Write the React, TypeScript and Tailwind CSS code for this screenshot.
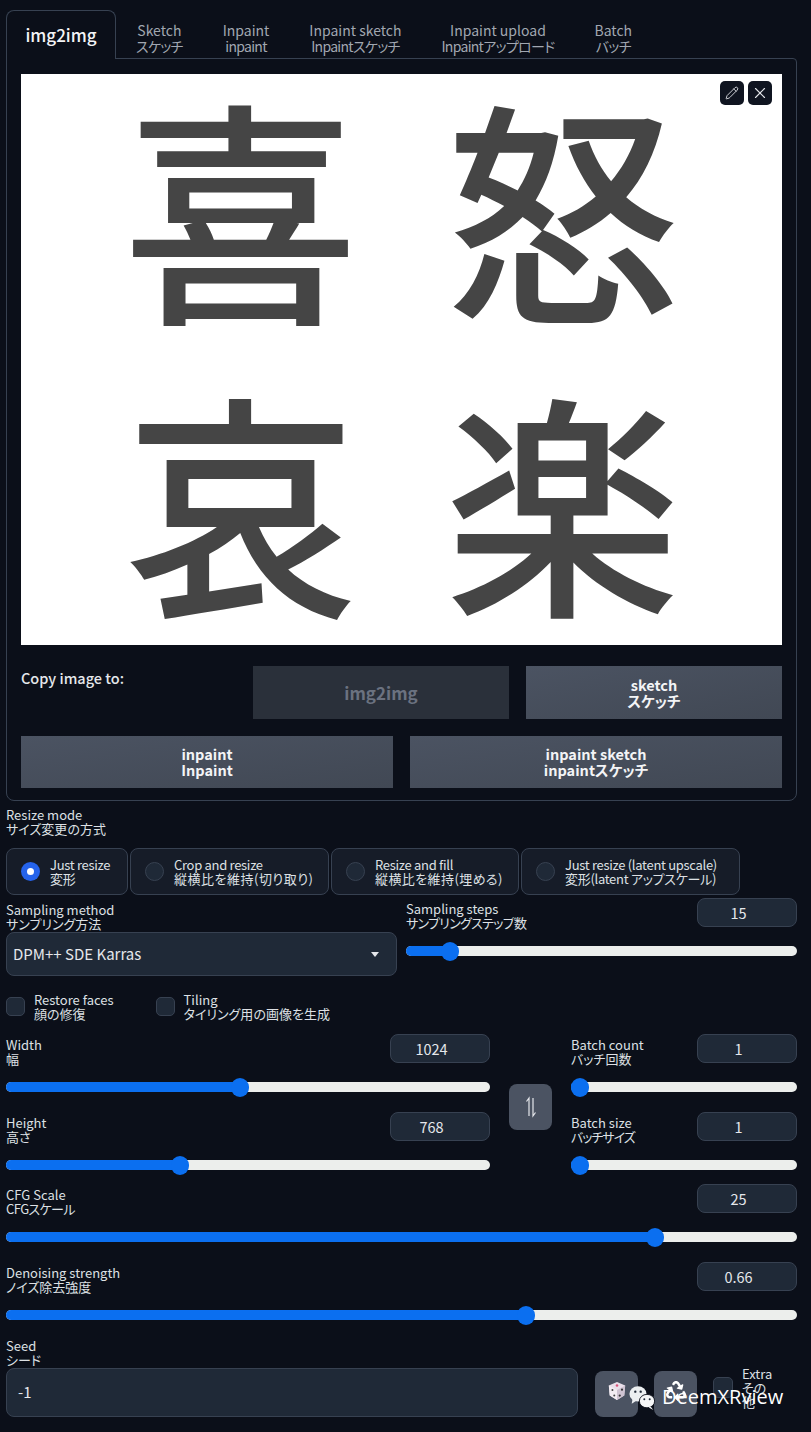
import { Pencil, X } from 'lucide-react';
import { FaRecycle } from 'react-icons/fa';

const font = { fontFamily: '"Noto Sans CJK JP", "Noto Sans", sans-serif' };

const tabs = [
  ['Sketch', 'スケッチ'],
  ['Inpaint', 'inpaint'],
  ['Inpaint sketch', 'Inpaintスケッチ'],
  ['Inpaint upload', 'Inpaintアップロード'],
  ['Batch', 'バッチ'],
];

const radios = [
  { en: 'Just resize', ja: '変形', w: 'w-[122px]', on: true },
  { en: 'Crop and resize', ja: '縦横比を維持(切り取り)', w: 'w-[199px]', jaClass: 'tracking-[0.5px]' },
  { en: 'Resize and fill', ja: '縦横比を維持(埋める)', w: 'w-[188px]', jaClass: 'tracking-[0.4px]' },
  { en: 'Just resize (latent upscale)', ja: '変形(latent アップスケール)', w: 'w-[219px]' },
];

function Label({ en, ja, tight, jaClass }: { en: string; ja: string; tight?: boolean; jaClass?: string }) {
  return (
    <div className={`text-[13px] leading-[14px] text-[#dde0e4] whitespace-nowrap ${tight ? 'tracking-[-0.3px]' : ''}`}>
      <div>{en}</div>
      <div className={jaClass}>{ja}</div>
    </div>
  );
}

function NumberBox({ value }: { value: string }) {
  return (
    <div className="flex h-[29px] w-[100px] items-center justify-center rounded-lg border border-[#374151] bg-[#1f2937] pr-[17px] text-[14.5px] text-[#e5e7eb]">
      {value}
    </div>
  );
}

function Slider({ value }: { value: number }) {
  return (
    <div className="relative h-[10px] w-full rounded-full bg-[#eceeec]">
      <div className="h-full rounded-full bg-[#0b6ff0]" style={{ width: `${value}%` }} />
      <div
        className="absolute top-[-4px] h-[19px] w-[18px] -translate-x-1/2 rounded-full bg-[#0b6ff0]"
        style={{ left: `${value}%` }}
      />
    </div>
  );
}

function SliderRow({ en, ja, num, value, jaClass }: { en: string; ja: string; num: string; value: number; jaClass?: string }) {
  return (
    <div>
      <div className="flex items-start justify-between">
        <div className="pt-[4px]">
          <Label en={en} ja={ja} jaClass={jaClass} />
        </div>
        <NumberBox value={num} />
      </div>
      <div className="mt-[16px]">
        <Slider value={value} />
      </div>
    </div>
  );
}

function CopyButton({ top, bottom, disabled }: { top: string; bottom?: string; disabled?: boolean }) {
  return (
    <div
      className={
        disabled
          ? 'flex h-full flex-1 items-center justify-center bg-[#2a303a] text-[17px] font-bold text-[#6b7280]'
          : 'flex h-full flex-1 flex-col items-center justify-center bg-gradient-to-br from-[#4b5362] to-[#414854] text-[14.5px] font-bold leading-[16px] text-[#f3f4f6]'
      }
    >
      <div>{top}</div>
      {bottom && <div>{bottom}</div>}
    </div>
  );
}

function Check({ en, ja, ml }: { en: string; ja: string; ml?: string }) {
  return (
    <div className={`flex items-start gap-[9px] ${ml ?? ''}`}>
      <div className="mt-[4px] h-[19px] w-[19px] rounded-[5px] border border-[#374151] bg-[#1f2937]" />
      <Label en={en} ja={ja} />
    </div>
  );
}

function Dice() {
  return (
    <svg width="20" height="20" viewBox="0 0 20 22" className="-mt-[6px]">
      <path d="M10 1 19 5 18 16 10 21 2 16 1 5Z" fill="#e9dfea" />
      <path d="M10 10 19 5 18 16 10 21Z" fill="#cfc3d2" />
      <path d="M10 10 1 5 2 16 10 21Z" fill="#f3edf3" />
      <circle cx="10" cy="5" r="1.4" fill="#d9527a" />
      <circle cx="5" cy="10" r="1.1" fill="#444" />
      <circle cx="7" cy="16" r="1.1" fill="#444" />
      <circle cx="15.5" cy="9.5" r="1.2" fill="#333" />
      <circle cx="13" cy="16" r="1.2" fill="#333" />
    </svg>
  );
}

function WeChat() {
  return (
    <svg width="29" height="27" viewBox="0 0 30 30">
      <ellipse cx="10" cy="11" rx="9.5" ry="8.5" fill="#eceff1" />
      <path d="M4 16 3 22 9 18Z" fill="#eceff1" />
      <circle cx="7" cy="8.5" r="1.3" fill="#1f2937" />
      <circle cx="13" cy="8.5" r="1.3" fill="#1f2937" />
      <ellipse cx="20" cy="19" rx="8.5" ry="7.5" fill="#f5f6f7" stroke="#0b0f19" strokeWidth="1" />
      <path d="M24 25 27 29 22 26Z" fill="#f5f6f7" />
      <circle cx="17" cy="17" r="1.1" fill="#1f2937" />
      <circle cx="23" cy="17" r="1.1" fill="#1f2937" />
    </svg>
  );
}

function SwapArrows() {
  return (
    <svg width="12" height="22" viewBox="0 0 12 22" fill="none" stroke="#e5e7eb" strokeWidth="1.2">
      <path d="M4 20V2L1.5 5.5" />
      <path d="M8 2V20L10.5 16.5" />
    </svg>
  );
}

export default function App() {
  return (
    <div
      className="relative h-[1432px] w-[811px] overflow-hidden bg-[#0b0f19] pl-[6px] pr-[14px] pt-[10px] text-[#d1d5db] [font-feature-settings:'palt']"
      style={font}
    >
      {/* tabs */}
      <div className="relative z-10 flex h-[49px] items-stretch">
        <div className="flex h-[49px] w-[110px] items-center justify-center rounded-t-lg border border-b-0 border-[#374151] bg-[#0b0f19] text-[17px] font-medium text-[#f3f4f6]">
          img2img
        </div>
        <div className="flex pt-[12px] text-[14px] leading-[16px] text-[#a1a7b1]">
          {tabs.map(([a, b]) => (
            <div key={a} className="px-[20px] text-center whitespace-nowrap">
              <div>{a}</div>
              <div className="tracking-[-0.7px]">{b}</div>
            </div>
          ))}
        </div>
      </div>

      <div className="-mt-px h-[743px] w-[791px] rounded-b-lg rounded-tr-sm border border-[#374151] px-[14px] pt-[15px]">
        <div className="relative h-[571px] w-[761px] overflow-hidden bg-white">
          <div className="grid grid-cols-[322px_322px] justify-center gap-y-[57px] pt-[11px] text-center text-[236px] font-medium leading-[236px] text-[#454545] [font-feature-settings:normal]">
            <div>喜</div>
            <div>怒</div>
            <div>哀</div>
            <div>楽</div>
          </div>
          <div className="absolute right-[10px] top-[7px] flex gap-[4px]">
            <div className="flex h-[24px] w-[24px] items-center justify-center rounded-[5px] bg-[#0f1420] text-[#e5e7eb]">
              <Pencil size={14} strokeWidth={1.5} />
            </div>
            <div className="flex h-[24px] w-[24px] items-center justify-center rounded-[5px] bg-[#0f1420] text-[#e5e7eb]">
              <X size={18} strokeWidth={1.5} />
            </div>
          </div>
        </div>

        <div className="mt-[21px] flex h-[53px]">
          <div className="w-[232px] text-[14.5px] font-medium leading-[23px] text-[#e5e7eb]">Copy image to:</div>
          <div className="flex flex-1 gap-[17px]">
            <CopyButton top="img2img" disabled />
            <CopyButton top="sketch" bottom="スケッチ" />
          </div>
        </div>
        <div className="mt-[17px] flex h-[52px] gap-[17px]">
          <CopyButton top="inpaint" bottom="Inpaint" />
          <CopyButton top="inpaint sketch" bottom="inpaintスケッチ" />
        </div>
      </div>

      {/* resize mode */}
      <div className="mt-[7px]">
        <Label en="Resize mode" ja="サイズ変更の方式" />
      </div>
      <div className="mt-[12px] flex gap-[2px]">
        {radios.map((r) => (
          <div
            key={r.en}
            className={`${r.w} flex h-[47px] shrink-0 items-center gap-[10px] rounded-lg border border-[#374151] bg-[#161c28] pl-[14px]`}
          >
            {r.on ? (
              <div className="flex h-[19px] w-[19px] shrink-0 items-center justify-center rounded-full bg-[#2563eb]">
                <div className="h-[7px] w-[7px] rounded-full bg-white" />
              </div>
            ) : (
              <div className="h-[19px] w-[19px] shrink-0 rounded-full border border-[#374151] bg-[#1f2937]" />
            )}
            <Label en={r.en} ja={r.ja} tight jaClass={r.jaClass} />
          </div>
        ))}
      </div>

      {/* sampling */}
      <div className="mt-[3px] flex gap-[9px]">
        <div className="w-[391px] pt-[5px]">
          <Label en="Sampling method" ja="サンプリング方法" />
          <div className="mt-[1px] flex h-[44px] items-center justify-between rounded-lg border border-[#374151] bg-[#1f2937] pl-[6px] pr-[17px] text-[15px] text-[#e5e7eb]">
            <span>DPM++ SDE Karras</span>
            <span className="h-0 w-0 border-x-[4px] border-t-[5px] border-x-transparent border-t-[#e5e7eb]" />
          </div>
        </div>
        <div className="flex-1">
          <SliderRow en="Sampling steps" ja="サンプリングステップ数" num="15" value={11.3} jaClass="tracking-[-0.7px]" />
        </div>
      </div>

      {/* checkboxes */}
      <div className="mt-[17px] flex">
        <Check en="Restore faces" ja="顔の修復" />
        <Check en="Tiling" ja="タイリング用の画像を生成" ml="ml-[42px]" />
      </div>

      {/* size and batch */}
      <div className="mt-[13px] flex">
        <div className="flex w-[484px] flex-col gap-[20px]">
          <SliderRow en="Width" ja="幅" num="1024" value={48.3} />
          <SliderRow en="Height" ja="高さ" num="768" value={36} />
        </div>
        <div className="mx-[19px] flex items-center">
          <div className="mt-[10px] flex h-[46px] w-[43px] items-center justify-center rounded-lg bg-[#4b5362]">
            <SwapArrows />
          </div>
        </div>
        <div className="flex w-[226px] flex-col gap-[20px]">
          <SliderRow en="Batch count" ja="バッチ回数" num="1" value={4} />
          <SliderRow en="Batch size" ja="バッチサイズ" num="1" value={4} jaClass="tracking-[-1px]" />
        </div>
      </div>

      <div className="mt-[14px]">
        <SliderRow en="CFG Scale" ja="CFGスケール" num="25" value={82} jaClass="tracking-[-0.6px]" />
      </div>
      <div className="mt-[20px]">
        <SliderRow en="Denoising strength" ja="ノイズ除去強度" num="0.66" value={65.7} />
      </div>

      {/* seed */}
      <div className="mt-[19px]">
        <Label en="Seed" ja="シード" />
      </div>
      <div className="mt-[1px] flex items-start">
        <div className="flex h-[49px] w-[572px] shrink-0 items-center rounded-lg border border-[#374151] bg-[#1f2937] pl-[11px] text-[15px] text-[#e5e7eb]">
          -1
        </div>
        <div className="ml-[17px] mt-[3px] flex h-[46px] w-[43px] shrink-0 items-center justify-center rounded-lg bg-[#4b5362]">
          <Dice />
        </div>
        <div className="ml-[16px] mt-[3px] flex h-[46px] w-[43px] shrink-0 items-center justify-center rounded-lg bg-[#4b5362] text-white">
          <FaRecycle size={20} className="-mt-[6px]" />
        </div>
        <div className="ml-[16px] mt-[9px] h-[21px] w-[20px] shrink-0 rounded-[5px] border border-[#374151] bg-[#1f2937]" />
        <div className="-mt-px ml-[9px] text-[13px] leading-[14px] text-[#dde0e4]">
          <div>Extra</div>
          <div>その</div>
          <div>他</div>
        </div>
      </div>

      {/* watermark */}
      <div className="absolute left-[628px] top-[1383px] flex items-center gap-[5px]">
        <WeChat />
        <span className="text-[20px] leading-[28px] text-white" style={{ fontFamily: '"Open Sans", sans-serif' }}>
          DeemXRview
        </span>
      </div>
    </div>
  );
}
